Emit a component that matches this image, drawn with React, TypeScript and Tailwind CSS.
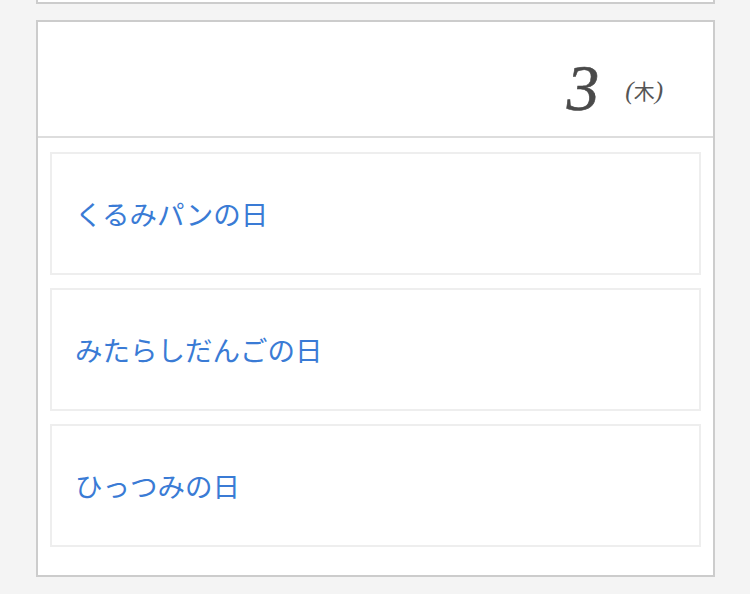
const events = ["くるみパンの日", "みたらしだんごの日", "ひっつみの日"];

export default function App() {
  return (
    <div className="min-h-[594px] bg-[#f4f4f4] pb-4" style={{ fontFamily: '"Noto Sans CJK JP", "Noto Sans", sans-serif' }}>
      <div className="ml-[36px] w-[679px] h-[4px] border-x-2 border-b-2 border-[#cccccc] bg-white" />
      <div className="ml-[36px] mt-[16px] w-[679px] border-2 border-[#cccccc] bg-white">
        <div className="flex h-[116px] items-start justify-end border-b-2 border-[#dddddd] pr-[50px] pt-[34px]">
          <span
            className="text-[65px] italic leading-none text-[#4a4a4a]"
            style={{ fontFamily: '"Liberation Serif", serif', WebkitTextStroke: "0.6px #4a4a4a" }}
          >
            3
          </span>
          <span
            className="ml-[26px] mt-[22px] text-[25px] italic leading-none text-[#555555]"
            style={{ fontFamily: '"Liberation Serif", serif' }}
          >
            (<span className="not-italic text-[21px]" style={{ fontFamily: '"Noto Sans CJK JP", serif' }}>木</span>)
          </span>
        </div>
        <div className="flex flex-col gap-[13px] px-[12px] pt-[14px] pb-[28px]">
          {events.map((e) => (
            <div key={e} className="flex h-[123px] items-center border-2 border-[#eeeeee] pl-[23px]">
              <span className="text-[27.5px] text-[#3a7bd5]">{e}</span>
            </div>
          ))}
        </div>
      </div>
    </div>
  );
}
